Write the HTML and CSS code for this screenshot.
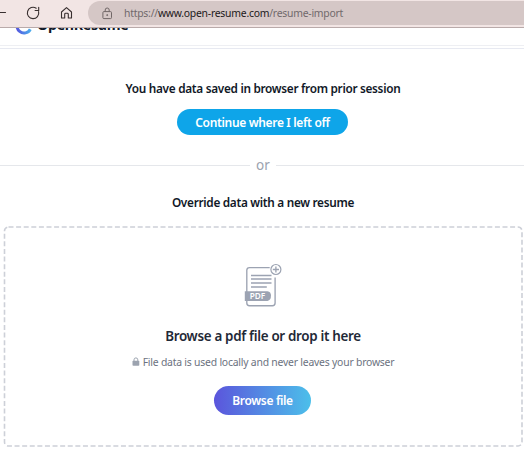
FILE: index.html
```
<!DOCTYPE html>
<html lang="en">
<head>
<meta charset="utf-8">
<title>OpenResume</title>
<link rel="stylesheet" href="styles.css">
</head>
<body>
<div class="toolbar">
  <svg class="nav-icons" width="88" height="27" viewBox="0 0 88 27" fill="none" stroke="#382f2f" stroke-width="1.1" stroke-linecap="round" stroke-linejoin="round">
    <path d="M0 12.5H5.5"/>
    <path d="M38.6 11.6A5.7 5.7 0 1 1 36.2 8.2M38.7 7.2V10.5H35.1"/>
    <path d="M61.5 12L66.5 7.6L71.5 12V18H68.3V14.2Q68.3 13.3 67.4 13.3H65.6Q64.7 13.3 64.7 14.2V18H61.5Z"/>
  </svg>
  <div class="address">
    <svg class="site-lock" width="11" height="13" viewBox="0 0 11 13" fill="none" stroke="#716767">
      <rect x=".9" y="4.6" width="8.6" height="7" rx="1"/><path d="M3.2 4.5V3a2 2 0 0 1 4 0V4.5"/><circle cx="5.2" cy="8.1" r=".5" fill="#716767"/>
    </svg>
    <span class="url"><span>https://</span><b>www.open-resume.com</b><span>/resume-import</span></span>
  </div>
</div>
<header class="site-header">
  <div class="brand">
    <svg class="logo" width="18" height="18" viewBox="0 0 18 18" fill="none">
      <defs><linearGradient id="lg"><stop stop-color="#5558df"/><stop offset="1" stop-color="#4cabed"/></linearGradient></defs>
      <path d="M15.3 12.2A7 7 0 1 1 15.3 5.8" stroke="url(#lg)" stroke-width="3"/>
    </svg>
    <span class="brand-name">OpenResume</span>
  </div>
</header>
<main>
  <h2 class="prior"><span>You have data saved in browser from prior session</span></h2>
  <a class="button continue"><span>Continue where I left off</span></a>
  <div class="divider"><span>or</span></div>
  <h2 class="override"><span>Override data with a new resume</span></h2>
  <section class="dropzone">
    <svg class="outline" width="520" height="222" viewBox="0 0 520 222" fill="none"><rect x="1.5" y="1" width="517.5" height="219" rx="4" stroke="#cdd0d8" stroke-width="1.6" stroke-dasharray="5 2.6"/></svg>
    <svg class="pdf-icon" width="40" height="46" viewBox="0 0 40 46" fill="none" stroke="#9ca3b2" stroke-width="1.35">
      <path d="M26.7 4.6H6.5Q3.8 4.6 3.8 7.3V40Q3.8 42.7 6.5 42.7H29.4Q32.1 42.7 32.1 40V14.5"/>
      <path d="M8 12.4H28.5M8 16H28.5M8 20H28.5M8 24H23.8" stroke-width="1.5"/>
      <path d="M1.8 28.2H24.5Q28 28.8 28 32.5Q28 37 24.5 38H1.8Z" fill="#9ca3b2" stroke="none"/>
      <circle cx="32.9" cy="6.5" r="5" stroke-width="1.2"/><path d="M29.8 6.5H36M32.9 3.4V9.6"/>
      <text x="6.8" y="36" class="pdf-label" textLength="15.5" lengthAdjust="spacingAndGlyphs">PDF</text>
    </svg>
    <p class="drop-title"><span>Browse a pdf file or drop it here</span></p>
    <p class="privacy">
      <svg width="8" height="10" viewBox="0 0 8 10"><rect x=".5" y="3.7" width="6.8" height="5" rx=".8" fill="#9ca3af"/><path d="M2 4V2.8a1.9 1.9 0 0 1 3.8 0V4" fill="none" stroke="#9ca3af"/></svg>
      <span>File data is used locally and never leaves your browser</span>
    </p>
    <a class="button browse"><span>Browse file</span></a>
  </section>
</main>
</body>
</html>
```
FILE: styles.css
```
* { box-sizing: border-box; }
body { margin: 0; width: 524px; height: 450px; overflow: hidden; background: #fff; color: #111827; font-family: "Noto Sans", "Open Sans", sans-serif; font-size: 12px; }
h2, p { margin: 0; white-space: nowrap; }
svg { display: block; flex: none; }
.toolbar { display: flex; height: 28px; background: #f2e5e4; border-bottom: 1px solid #b9aaaa; }
.address { display: flex; align-items: center; flex: 1; height: 24px; margin-top: 1px; padding-left: 14px; background: #d5c7c6; border-radius: 12px 0 0 12px; }
.site-lock { margin-right: 11px; }
.url { font-size: 10.4px; line-height: 22px; letter-spacing: -.24px; white-space: nowrap; color: #70696b; }
.url b { font-weight: 400; color: #1c191a; }
.site-header { height: 21px; overflow: hidden; border-bottom: 1px solid #e7e9f1; position: relative; }
.site-header::after { content: ""; position: absolute; left: 0; right: 0; top: 17px; height: 1px; background: #eeeff3; }
.brand { display: flex; align-items: center; gap: 4px; height: 18px; margin: -12px 0 0 15px; }
.logo { margin-top: 2px; }
.brand-name { font-size: 14.2px; font-weight: 700; line-height: 18px; letter-spacing: -.28px; }
main { display: flex; flex-direction: column; align-items: center; }
h2 { font-size: 11.8px; font-weight: 600; line-height: 18px; letter-spacing: -.3px; }
.prior { margin: 30px 0 0 2px; }
.button { display: flex; align-items: center; justify-content: center; border-radius: 15px; color: #fff; font-weight: 600; white-space: nowrap; letter-spacing: -.34px; }
.continue { width: 171px; height: 26px; margin: 12px 0 0 1px; background: #0ea5e9; }
.divider { display: flex; align-items: center; gap: 6px; width: 524px; height: 24px; margin-top: 18px; color: #9ca3af; font-size: 13.5px; }
.divider::before, .divider::after { content: ""; flex: 1; height: 1px; background: #e5e7eb; }
.divider::before { flex: 0 0 250px; }
.override { margin: 16px 0 0 2px; }
.dropzone { position: relative; display: flex; flex-direction: column; align-items: center; width: 520px; height: 222px; margin: 15px 0 0 2px; }
.outline { position: absolute; left: 0; top: 0; }
.pdf-icon { margin-top: 37px; }
.pdf-label { font: 600 8.5px "Noto Sans", sans-serif; fill: #fff; stroke: none; }
.drop-title { margin-top: 16px; color: #1f2937; font-size: 13.4px; font-weight: 600; line-height: 22px; letter-spacing: -.31px; }
.privacy { display: flex; align-items: center; gap: 3px; margin-top: 6px; color: #6b7280; font-size: 10.4px; line-height: 18px; letter-spacing: -.21px; }
.browse { width: 97px; height: 29px; margin: 15px 1px 0 0; background: linear-gradient(90deg, #5b55dc, #4cbfea); }
```
